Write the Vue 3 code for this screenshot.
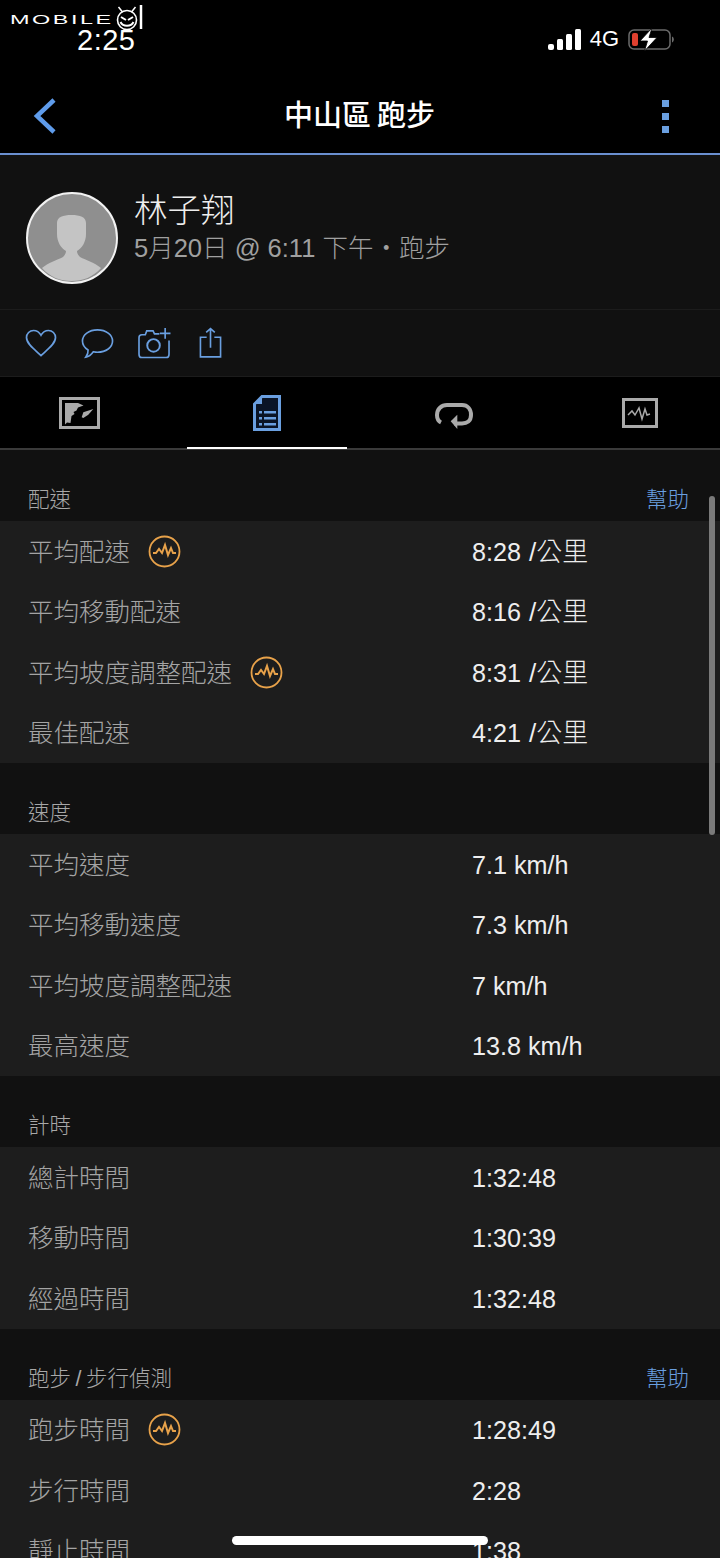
<script setup>
const sections = [
  {
    title: '配速',
    help: true,
    rows: [
      { label: '平均配速', value: '8:28', unit: '/公里', badge: true },
      { label: '平均移動配速', value: '8:16', unit: '/公里' },
      { label: '平均坡度調整配速', value: '8:31', unit: '/公里', badge: true },
      { label: '最佳配速', value: '4:21', unit: '/公里' }
    ]
  },
  {
    title: '速度',
    rows: [
      { label: '平均速度', value: '7.1 km/h' },
      { label: '平均移動速度', value: '7.3 km/h' },
      { label: '平均坡度調整配速', value: '7 km/h' },
      { label: '最高速度', value: '13.8 km/h' }
    ]
  },
  {
    title: '計時',
    rows: [
      { label: '總計時間', value: '1:32:48' },
      { label: '移動時間', value: '1:30:39' },
      { label: '經過時間', value: '1:32:48' }
    ]
  },
  {
    title: '跑步 / 步行偵測',
    help: true,
    rows: [
      { label: '跑步時間', value: '1:28:49', badge: true },
      { label: '步行時間', value: '2:28' },
      { label: '靜止時間', value: '1:38' }
    ]
  }
]
</script>

<template>
  <div class="screen">
    <header class="top">
      <div class="status">
        <div class="status-left">
          <div class="watermark">
            <span class="wm-text">MOBILE</span>
            <svg class="wm-face" width="30" height="27" viewBox="0 0 30 27" fill="none" stroke="#fff">
              <circle cx="13" cy="16" r="9.500" stroke-width="1.600" />
              <path d="M4.500 3l4 5M21.500 3l-4 5" stroke-width="1.500" />
              <path d="M7 13l5 3M19 13l-5 3" stroke-width="2" />
              <path d="M6.500 18c2.500 5 10.500 5 13 0" stroke-width="2" />
              <path d="M27 1v24" stroke-width="2.500" />
            </svg>
          </div>
          <span class="time">2:25</span>
        </div>
        <div class="status-right">
          <svg width="33" height="21" viewBox="0 0 33 21" fill="#fff">
            <rect x="0" y="15" width="6" height="6" rx="2" />
            <rect x="9" y="10" width="6" height="11" rx="1.500" />
            <rect x="18" y="5" width="6" height="16" rx="1.500" />
            <rect x="27" y="0" width="6" height="21" rx="1.500" />
          </svg>
          <span class="net">4G</span>
          <svg width="46" height="23" viewBox="0 0 46 23" fill="none">
            <rect x="1" y="2" width="41" height="19" rx="5" stroke="#6b6b6b" stroke-width="1.500" />
            <path d="M44 8.500v6c1.200-.4 1.800-1.600 1.800-3s-.6-2.600-1.800-3z" fill="#6b6b6b" />
            <rect x="4" y="5" width="6" height="13" rx="2" fill="#e0402f" />
            <path d="M24 0L12 13h7.500L16.500 23 29 9.500h-8z" fill="#fff" stroke="#000" stroke-width=".8" />
          </svg>
        </div>
      </div>
      <nav class="navbar">
        <svg width="24" height="36" viewBox="0 0 24 36" fill="none" stroke="#5f9ceb" stroke-width="4.500">
          <path d="M21 2L4 18l17 16" />
        </svg>
        <h1 class="nav-title">中山區 跑步</h1>
        <div class="nav-more"><i></i><i></i><i></i></div>
      </nav>
    </header>

    <section class="profile">
      <svg class="avatar" width="92" height="92" viewBox="0 0 92 92">
        <circle cx="46" cy="46" r="45" fill="#8f8f8f" stroke="#f2f2f2" stroke-width="2" />
        <path d="M16 76c6-5 15-8 21-11 2-2 3-4 3-6-5-3-9-9-9-17V31c0-6 6-8 14.500-8S60 25 60 31v11c0 8-4 14-9 17 0 2 1 4 3 6 6 3 15 6 21 11-8 9-18 13-29.500 13S24 85 16 76z" fill="#c4c4c4" />
      </svg>
      <div class="who">
        <div class="name">林子翔</div>
        <div class="when">5月20日 @ 6:11 下午・跑步</div>
      </div>
    </section>

    <section class="actions">
      <svg width="32" height="28" viewBox="0 0 32 28" fill="none" stroke="#6a9fe0" stroke-width="1.700">
        <path d="M16 26.500C10 21 1.500 15 1.500 8.500 1.500 4.500 4.700 1.500 8.500 1.500c3 0 5.800 1.700 7.500 4.700 1.700-3 4.500-4.700 7.500-4.700 3.800 0 7 3 7 7C30.500 15 22 21 16 26.500z" />
      </svg>
      <svg width="33" height="31" viewBox="0 0 34 31" fill="none" stroke="#6a9fe0" stroke-width="1.700">
        <path d="M17 1.500c8.800 0 15.500 5 15.500 11.500S25.800 24.500 17 24.500c-1.500 0-3-.2-4.300-.5-1.800 2.500-4.700 5-7.700 5.500 1.500-2 2.500-4.500 2.300-7.300C3.700 20 1.500 16.700 1.500 13 1.500 6.500 8.200 1.500 17 1.500z" />
      </svg>
      <svg width="33" height="31" viewBox="0 0 34 32" fill="none" stroke="#6a9fe0" stroke-width="1.700">
        <path d="M22 6h-5l-1.500-3H9L7.500 7H4c-1.700 0-3 1.300-3 3v17c0 2 1.300 3.500 3 3.500h25c1.700 0 3-1.500 3-3.500V13" />
        <circle cx="16" cy="18" r="6.500" stroke-width="2" />
        <path d="M28 0v11M22.500 5.500h11" />
      </svg>
      <svg class="share" width="23" height="32" viewBox="0 0 24 32" fill="none" stroke="#6a9fe0" stroke-width="1.700">
        <path d="M8 10H1.500v20.500h21V10H16" />
        <path d="M12 21V1M7.500 5L12 1l4.500 4" />
      </svg>
    </section>

    <div class="tabs">
      <div class="tab">
        <svg width="41" height="32" viewBox="0 0 41 32">
          <rect x="1.500" y="1.500" width="38" height="29" fill="none" stroke="#aaa" stroke-width="3" />
          <path d="M6 6h13l5.500 2.500L19 10.500l-1.500 3-3 1.500 1 2-3 2-1 7L8 25.500 6 27.500z" fill="#aaa" />
          <path d="M22.700 20.300l1.600-5 10-3.300-5 5.700-5 3.300z" fill="#aaa" />
        </svg>
      </div>
      <div class="tab active">
        <svg width="28" height="36" viewBox="0 0 28 36">
          <path d="M9 1.500h17.500v33h-25V9z" fill="#0a1426" stroke="#6a9fe0" stroke-width="3" />
          <path d="M9 1v8H1z" fill="#6a9fe0" />
          <path d="M6 16h3v2.500H6zM11 16h12v2.500H11zM6 22h3v2.500H6zM11 22h12v2.500H11zM6 28h3v2.500H6zM11 28h12v2.500H11z" fill="#6a9fe0" />
        </svg>
      </div>
      <div class="tab">
        <svg class="loop" width="38" height="26" viewBox="0 0 38 26" fill="none" stroke="#aaa" stroke-width="4">
          <path d="M6 19.500C3 18 2 15 2 12 2 6 6.500 2 12 2h15c5.500 0 9 4 9 10s-4 8.500-9 8.500h-8" />
          <path d="M15.700 18.300l6.600-6.600V26z" fill="#aaa" stroke="none" />
        </svg>
      </div>
      <div class="tab">
        <svg class="chart" width="36" height="30" viewBox="0 0 36 30" fill="none" stroke="#aaa">
          <rect x="1.500" y="1.500" width="33" height="27" stroke-width="3" />
          <path d="M6 17l4-4 3 4 4-7 3 11 3-10 2 6 3-1" stroke-width="1.500" />
        </svg>
      </div>
    </div>

    <main class="stats">
      <section v-for="section in sections" :key="section.title" class="group">
        <div class="group-head">
          <span class="group-title">{{ section.title }}</span>
          <span v-if="section.help" class="help">幫助</span>
        </div>
        <div class="group-body">
          <div v-for="row in section.rows" :key="row.label" class="row">
            <div class="row-label">
              <span>{{ row.label }}</span>
              <svg v-if="row.badge" width="33" height="33" viewBox="0 0 33 33" fill="none" stroke="#e8a24a">
                <circle cx="16.500" cy="16.500" r="15" stroke-width="1.800" />
                <path d="M5 18h3l3-4 3 4 3-8 3 10 3-7 2 5h3" stroke-width="2" />
              </svg>
            </div>
            <div class="row-value">
              {{ row.value }}<span v-if="row.unit" class="unit">{{ row.unit }}</span>
            </div>
          </div>
        </div>
      </section>
    </main>

    <div class="scrollbar"></div>
    <div class="home"></div>
  </div>
</template>

<style>
html, body {
  background: #000;
}
</style>

<style scoped>
.screen {
  position: relative;
  width: 720px;
  height: 1558px;
  overflow: hidden;
  background: #111;
  color: #fff;
  font-family: "Liberation Sans", "Noto Sans CJK TC", sans-serif;
}

.top {
  height: 155px;
  box-sizing: border-box;
  background: #000;
  border-bottom: 2px solid #6a8fd0;
}

.status {
  height: 64px;
  display: flex;
  justify-content: space-between;
}

.status-left {
  position: relative;
  padding: 25px 0 0 77px;
}

.watermark {
  position: absolute;
  left: 10px;
  top: 4px;
  display: flex;
}

.wm-text {
  display: inline-block;
  width: 104px;
  font-size: 12px;
  line-height: 32px;
  height: 27px;
  letter-spacing: 1.300px;
  transform: scaleX(1.950);
  transform-origin: left center;
}

.time {
  display: block;
  font-size: 29px;
  line-height: 30px;
  letter-spacing: .5px;
}

.status-right {
  display: flex;
  align-items: center;
  height: 44px;
  gap: 9px;
  padding: 17px 46px 0 0;
}

.net {
  font-size: 22px;
}

.navbar {
  height: 89px;
  display: flex;
  align-items: center;
  justify-content: space-between;
  padding: 15px 51px 0 33px;
  box-sizing: border-box;
}

.nav-title {
  margin: 0;
  font-size: 29px;
  font-weight: 500;
  line-height: 40px;
  word-spacing: -2px;
}

.nav-more {
  display: flex;
  flex-direction: column;
  gap: 6px;
}

.nav-more i {
  display: block;
  width: 7px;
  height: 7px;
  background: #6a9fe0;
}

.profile {
  height: 155px;
  box-sizing: border-box;
  display: flex;
  gap: 16px;
  padding: 37px 0 0 26px;
  border-bottom: 1px solid #1c1c1c;
}

.name {
  font-size: 33.500px;
  line-height: 38px;
  font-weight: 300;
  color: #eee;
}

.when {
  margin-top: 1px;
  font-size: 25.500px;
  line-height: 34px;
  font-weight: 300;
  color: #a0a0a0;
}

.actions {
  height: 67px;
  box-sizing: border-box;
  display: flex;
  align-items: center;
  gap: 24px;
  padding-left: 25px;
  border-bottom: 1px solid #1c1c1c;
}

.share {
  margin-left: 4px;
}

.tabs {
  height: 73px;
  margin: 0 -14px;
  box-sizing: border-box;
  background: #000;
  display: flex;
  border-bottom: 2px solid #3a3a3a;
}

.tab {
  flex: 1;
  position: relative;
  display: flex;
  align-items: center;
  justify-content: center;
  padding-top: 1px;
}

.loop {
  margin-top: 5px;
}

.chart {
  margin-left: -2px;
}

.tab.active::after {
  content: "";
  position: absolute;
  left: 14px;
  right: 13px;
  bottom: -1px;
  height: 2px;
  background: #fff;
}

.group-head {
  height: 71px;
  box-sizing: border-box;
  display: flex;
  align-items: flex-end;
  justify-content: space-between;
  padding: 0 31px 6px 28px;
  font-size: 21.500px;
  font-weight: 300;
  line-height: 30px;
  color: #a8a8a8;
}

.group-title {
  word-spacing: -1.500px;
}

.help {
  color: #6a9fe0;
}

.group-body {
  background: #1d1d1d;
}

.row {
  height: 60.500px;
  display: flex;
  align-items: center;
  padding-left: 28px;
}

.row-label {
  width: 444px;
  height: 33px;
  display: flex;
  align-items: center;
  gap: 18px;
  font-size: 25.500px;
  font-weight: 300;
  color: #a4a4a4;
}

.row-label span {
  height: 33px;
  line-height: 35px;
}

.row-value {
  height: 33px;
  line-height: 35px;
  font-size: 25.200px;
  color: #eee;
}

.unit {
  margin-left: 8px;
  font-size: 26px;
  font-weight: 300;
}

.scrollbar {
  position: absolute;
  left: 709px;
  top: 496px;
  width: 6px;
  height: 339px;
  border-radius: 3px;
  background: #7a7a7a;
}

.home {
  position: absolute;
  left: 232px;
  top: 1536px;
  width: 256px;
  height: 9px;
  border-radius: 5px;
  background: #fff;
}
</style>
